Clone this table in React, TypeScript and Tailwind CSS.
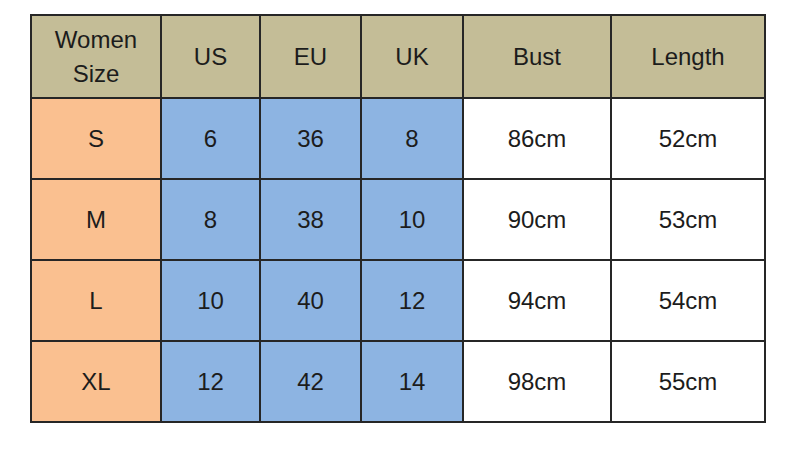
import React from "react";

const cols = ["w-[130px]", "w-[99px]", "w-[101px]", "w-[102px]", "w-[148px]", "w-[154px]"];

const rows = [
  ["S", "6", "36", "8", "86cm", "52cm"],
  ["M", "8", "38", "10", "90cm", "53cm"],
  ["L", "10", "40", "12", "94cm", "54cm"],
  ["XL", "12", "42", "14", "98cm", "55cm"],
];

const bodyBg = ["bg-[#fac090]", "bg-[#8db4e2]", "bg-[#8db4e2]", "bg-[#8db4e2]", "bg-white", "bg-white"];

const Cell = ({ w, bg, h, children }: { w: string; bg: string; h: string; children: React.ReactNode }) => (
  <div className={`${w} ${bg} ${h} flex items-center justify-center text-center border-r-2 border-b-2 border-[#262626]`}>
    {children}
  </div>
);

const App = () => {
  return (
    <div className="w-[800px] h-[449px] bg-white pt-[14px] pl-[30px] text-[24px] text-[#1c1c1c] font-['Liberation_Sans',Arial,sans-serif]">
      <div className="flex flex-col w-max border-l-2 border-t-2 border-[#262626]">
        <div className="flex">
          <Cell w={cols[0]} bg="bg-[#c4bd97]" h="h-[83px]">
            <span className="leading-[34px]">Women<br />Size</span>
          </Cell>
          {["US", "EU", "UK", "Bust", "Length"].map((t, i) => (
            <Cell key={t} w={cols[i + 1]} bg="bg-[#c4bd97]" h="h-[83px]">
              {t}
            </Cell>
          ))}
        </div>
        {rows.map((r) => (
          <div className="flex" key={r[0]}>
            {r.map((t, i) => (
              <Cell key={i} w={cols[i]} bg={bodyBg[i]} h="h-[81px]">
                {t}
              </Cell>
            ))}
          </div>
        ))}
      </div>
    </div>
  );
};

export default App;
